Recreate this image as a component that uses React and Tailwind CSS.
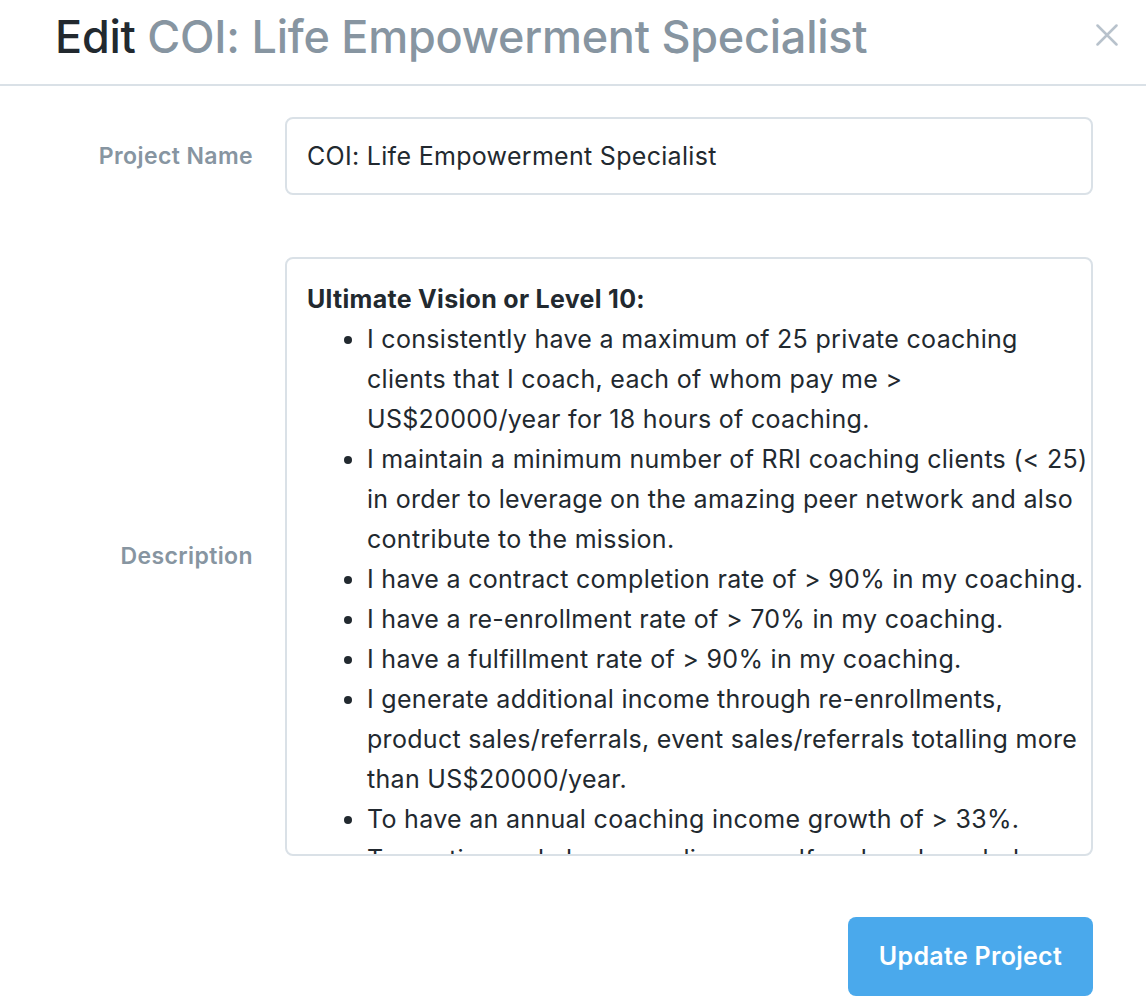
import React from 'react'

const goals = [
  'I consistently have a maximum of 25 private coaching clients that I coach, each of whom pay me > US$20000/year for 18 hours of coaching.',
  'I maintain a minimum number of RRI coaching clients (< 25) in order to leverage on the amazing peer network and also contribute to the mission.',
  'I have a contract completion rate of > 90% in my coaching.',
  'I have a re-enrollment rate of > 70% in my coaching.',
  'I have a fulfillment rate of > 90% in my coaching.',
  'I generate additional income through re-enrollments, product sales/referrals, event sales/referrals totalling more than US$20000/year.',
  'To have an annual coaching income growth of > 33%.',
  'To continuously be upgrading myself and my knowledge, skill sets and abilities as a coach.',
]

const EditProject = () => {
  return (
    <div className="bg-white min-h-[1000px] text-[#22292f] font-['Inter','Liberation_Sans',sans-serif]">
      {/* header */}
      <div className="h-[86px] border-b-2 border-[#dae1e7] flex items-center justify-between pl-[55px] pr-[28px]">
        <h1 className="text-[45px] font-medium tracking-[-0.25px] pb-[10px]">
          Edit <span className="text-[#8795a1]">COI: Life Empowerment Specialist</span>
        </h1>
        <button className="pb-[14px]">
          <svg width="22" height="22" viewBox="0 0 22 22" fill="none" stroke="#b8c2cc" strokeWidth="2.5" strokeLinecap="round">
            <path d="M1.5 1.5l19 19M20.5 1.5l-19 19" />
          </svg>
        </button>
      </div>

      {/* form */}
      <div className="pr-[53px] pt-[31px]">
        <div className="flex items-center">
          <label className="w-[253px] text-right text-[23px] font-semibold tracking-[0.4px] text-[#8795a1]">Project Name</label>
          <input
            className="ml-[32px] flex-1 h-[78px] border-2 border-[#dae1e7] rounded-lg px-[20px] text-[25px] tracking-[0.3px] text-[#22292f] outline-none"
            defaultValue="COI: Life Empowerment Specialist"
          />
        </div>

        <div className="flex items-center mt-[62px]">
          <label className="w-[253px] text-right text-[23px] font-semibold tracking-[0.4px] text-[#8795a1]">Description</label>
          <div className="ml-[32px] flex-1 h-[599px] border-2 border-[#dae1e7] rounded-lg pl-[20px] pr-[2px] pt-[20px] overflow-hidden text-[25px] tracking-[0.3px] leading-[40px]">
            <p className="font-bold">Ultimate Vision or Level 10:</p>
            <ul className="list-disc pl-[60px]">
              {goals.map((g) => (
                <li key={g}>{g}</li>
              ))}
            </ul>
          </div>
        </div>

        <div className="flex justify-end mt-[61px]">
          <button className="w-[245px] h-[79px] rounded-lg bg-[#4aa9ec] text-white text-[25px] tracking-[0.3px] font-semibold">
            Update Project
          </button>
        </div>
      </div>
    </div>
  )
}

export default EditProject
